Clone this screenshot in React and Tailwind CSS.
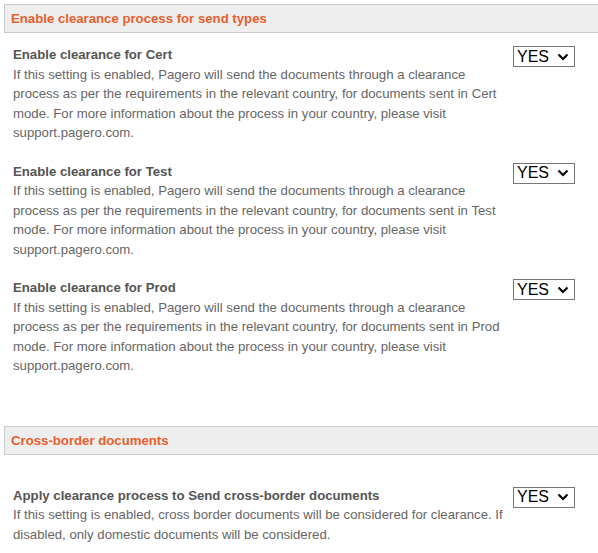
import { useState } from "react";

const sendTypes = ["Cert", "Test", "Prod"];

function YesSelect() {
  return (
    <div className="flex h-[21px] w-[62px] shrink-0 items-center border border-[#767676] bg-white pl-[3px] pr-[5px] text-[16px] leading-none text-black">
      <span>YES</span>
      <svg className="ml-auto" width="12" height="8" viewBox="0 0 12 8" fill="none">
        <path d="M1.5 1.5 L6 6 L10.5 1.5" stroke="#000" strokeWidth="2.2" />
      </svg>
    </div>
  );
}

function SectionHeader({ children }) {
  return (
    <div className="h-[29px] border-y border-l border-[#ccc] bg-[#eee] py-[4px] pl-[6px] font-bold text-[#e8602c]">
      {children}
    </div>
  );
}

function Setting({ title, children }) {
  return (
    <div className="flex pl-[9px]">
      <div className="w-[494px]">
        <div className="font-bold text-[#555]">{title}</div>
        <div className="text-[#666]">{children}</div>
      </div>
      <div className="ml-[6px] pt-[1px]">
        <YesSelect />
      </div>
    </div>
  );
}

export default function App() {
  return (
    <div className="min-h-screen w-full overflow-hidden bg-white pl-1 pt-1 font-['Liberation_Sans',Arial,sans-serif] text-[13.2px] leading-[19.5px]">
      <SectionHeader>Enable clearance process for send types</SectionHeader>

      <div className="mt-[12px] flex flex-col gap-[19px]">
        {sendTypes.map((t) => (
          <Setting key={t} title={`Enable clearance for ${t}`}>
            If this setting is enabled, Pagero will send the documents through a clearance process as per the
            requirements in the relevant country, for documents sent in {t} mode. For more information about the
            process in your country, please visit support.pagero.com.
          </Setting>
        ))}
      </div>

      <div className="mt-[50px]">
        <SectionHeader>Cross-border documents</SectionHeader>
      </div>

      <div className="mt-[31px]">
        <Setting title="Apply clearance process to Send cross-border documents">
          If this setting is enabled, cross border documents will be considered for clearance. If disabled, only
          domestic documents will be considered.
        </Setting>
      </div>
    </div>
  );
}
